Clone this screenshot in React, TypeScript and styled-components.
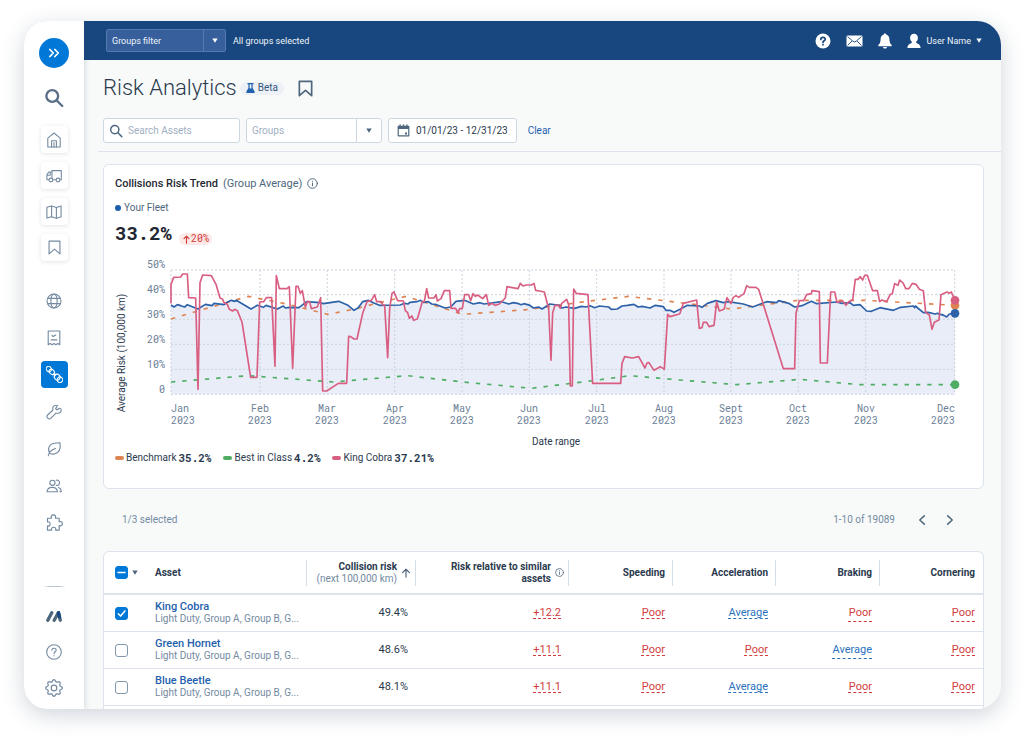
import React from "react";
import styled, { createGlobalStyle, css } from "styled-components";

const c = {
  ink: "#2b3a4e",
  strong: "#1f2833",
  slate: "#4e677e",
  muted: "#748aa1",
  line: "#dce3ec",
  link: "#1f61ad",
  blue: "#0078d7",
  navy: "#17477e",
  red: "#d23c3c",
  page: "#f8fafa",
};

const sans = `Roboto, "Liberation Sans", sans-serif`;
const mono = `"Roboto Mono", "Liberation Mono", monospace`;

const Global = createGlobalStyle`
  * { box-sizing: border-box; }
  body { margin: 0; background: #fff; color: ${c.ink}; font: 10px/12px ${sans}; }
  button, input, select { font: inherit; color: inherit; }
  svg { display: block; flex: none; }
`;

/* ---------- icons ---------- */

type IconProps = { size?: number; w?: number; children: React.ReactNode };
const Icon = ({ size = 16, w = 1.1, children }: IconProps) => (
  <svg width={size} height={size} viewBox="0 0 16 16" fill="none" stroke="currentColor" strokeWidth={w}
    strokeLinecap="round" strokeLinejoin="round" aria-hidden="true">
    {children}
  </svg>
);

const SearchIcon = ({ size = 20, w = 1.9 }: { size?: number; w?: number }) => (
  <Icon size={size} w={w}><circle cx="6.6" cy="6.4" r="4.7" /><path d="M10.2 10 14.6 14.4" /></Icon>
);
const HomeIcon = () => (
  <Icon><path d="M1.8 6.2 8 1l6.2 5.2V15H1.8Z" /><path d="M5.6 15V8.8h4.8V15M8 10.6V15" /></Icon>
);
const TruckIcon = () => (
  <Icon><path d="M6 10V2.600h9.300v9.200h-1.200M9.900 11.800H7M2.900 11.800H.9V7.200L2.600 4H6M1 7.200h3.200V4.200" /><circle cx="4.900" cy="12" r="1.900" /><circle cx="12" cy="12" r="1.900" /></Icon>
);
const MapIcon = () => (
  <Icon><path d="M.9 3.3 5.6 2l4.8 1.5L15.1 2v10.8l-4.7 1.4-4.8-1.5L.9 14Z" /><path d="M5.6 2v10.7M10.4 3.5v10.7" /></Icon>
);
const BookmarkIcon = ({ size = 16, w = 1.2 }: { size?: number; w?: number }) => (
  <Icon size={size} w={w}><path d="M2.2 1.2h11.6v13.6L8 9.8l-5.8 5Z" /></Icon>
);
const GlobeIcon = () => (
  <Icon><circle cx="8" cy="8" r="7" /><ellipse cx="8" cy="8" rx="3.2" ry="7" /><path d="M1.6 5.4h12.8M1.6 10.6h12.8" /></Icon>
);
const ReceiptIcon = () => (
  <Icon><path d="M2.2 1h11.6v13.8l-2-1.3-1.9 1.3L8 13.5l-1.9 1.3-1.9-1.3-2 1.3Z" /><path d="m6 5.5 1.2 1L9.8 5M5.2 9.9h5.6" /></Icon>
);
const ChainIcon = () => (
  <Icon size={17} w={1}>
    <g transform="rotate(44 8 8)">
      <ellipse cx="0.600" cy="8" rx="2.600" ry="2.300" />
      <ellipse cx="4.400" cy="8" rx="2.800" ry="2.100" />
      <path d="M7.200 6.800v2.400M8.800 6.800v2.400M7.200 8h1.600" />
      <ellipse cx="11.600" cy="8" rx="2.800" ry="2.600" />
      <ellipse cx="15.200" cy="8" rx="2.600" ry="2.600" />
    </g>
  </Icon>
);
const WrenchIcon = () => (
  <Icon><path d="M13.3 4.2 10.9 6 9.6 4.6l1.9-2.9C9.4.5 6.9 2 6.7 4.2c0 .6.1 1.2.3 1.8L1.6 11c-2 2 1.2 5.2 3.2 3.4l5.1-5.3c2.6.7 5.6-.6 5.3-3.4-.1-.8-.5-1.5-1.9-1.5Z" /></Icon>
);
const LeafIcon = () => (
  <Icon><path d="M2.3 14.800c.3-3.200 2.900-6 7.300-7.400M3.900 12.400C1 8 3 2.800 8.300 2.200L14 1.700c.4 3.500.4 6.700-1.600 9-2 2.300-5.700 3.200-8.500 1.700Z" /></Icon>
);
const UsersIcon = () => (
  <Icon><circle cx="6.4" cy="4.8" r="2.6" /><path d="M1 13.700c.3-3 2.400-4.300 5.200-4.300s5 1.300 5.300 4.300ZM10.200 2.300c1.800-.6 3.300.7 3.300 2.500s-1.500 3.100-3.300 2.500M12.500 9.600c1.500.5 2.600 1.700 2.800 4.100h-1.500" /></Icon>
);
const PuzzleIcon = () => (
  <Icon size={17}><path d="M1.400 4h3.800c-.9-1.700.2-3.200 1.800-3.200S9.700 2.300 8.800 4h3.600v3.400c1.600-.8 3 .1 3 1.700s-1.400 2.600-3 1.700v4.400H9.100c.7-1.600-.5-2.700-1.900-2.700s-2.600 1.100-1.900 2.700H1.400v-4c1.500.6 2.500-.5 2.500-1.900S2.900 6.900 1.400 7.500Z" /></Icon>
);
const LogoIcon = () => (
  <svg width="18" height="16" viewBox="0 0 18 16" aria-hidden="true" strokeLinecap="round" fill="none">
    <path d="M2.800 12.200 6.800 4.800" stroke={c.slate} strokeWidth="3.400" />
    <path d="m13.500 4.800 1.800 7.400" stroke={c.slate} strokeWidth="3.400" />
    <path d="M9.200 12.200 13.300 4.800" stroke={c.slate} strokeWidth="3.400" />
    <path d="m13.500 4.800.9 4" stroke={c.navy} strokeWidth="3.400" />
  </svg>
);
const HelpIcon = () => (
  <Icon><circle cx="8" cy="8" r="7.3" /><path d="M5.900 6.300c0-2.800 4.300-2.700 4.300-.2C10.200 7.700 8 7.800 8 9.600M8 11.600v.2" /></Icon>
);

/* Eight soft lobes around the hub. */
const gearOutline = "M" + Array.from({ length: 96 }, (_, i) => {
  const a = (i / 96) * Math.PI * 2;
  const r = 6.500 + 0.900 * Math.cos(8 * a);
  return `${(8 + r * Math.cos(a)).toFixed(2)} ${(8 + r * Math.sin(a)).toFixed(2)}`;
}).join("L") + "Z";
const GearIcon = () => (
  <Icon size={18}><circle cx="8" cy="8" r="2.500" /><path d={gearOutline} /></Icon>
);
const InfoIcon = ({ size = 11 }: { size?: number }) => (
  <Icon size={size} w={1.4}><circle cx="8" cy="8" r="7" /><path d="M8 7.400v4M8 4.700v.3" /></Icon>
);
const Chevrons = () => (
  <Icon size={14} w={2}><path d="m3.300 4 3.900 4-3.900 4M9 4l3.900 4L9 12" /></Icon>
);
const CalendarIcon = () => (
  <svg width="13" height="13" viewBox="0 0 13 13" aria-hidden="true">
    <path d="M1.200 2.400h10.600v9.400H1.200Z" fill="none" stroke="currentColor" strokeWidth="1.200" strokeLinejoin="round" />
    <path d="M1 2h11v3H1ZM2.400.4h1.400V3H2.400ZM5.800.4h1.400V3H5.800ZM9.200.4h1.400V3H9.200ZM8 8.400h2v2H8Z" fill="currentColor" />
  </svg>
);
const FlaskIcon = () => (
  <svg width="9" height="10" viewBox="0 0 9 10" aria-hidden="true" fill={c.link}>
    <path d="M1.500 0h6v1.200h-.9V5L8.600 8.400V10H.4V8.400L2.400 5V1.200h-.9ZM3.600 1.200V5.400h1.800V1.200Z" fillRule="evenodd" />
  </svg>
);
const Caret = () => (
  <svg width="6" height="5" viewBox="0 0 6 5" aria-hidden="true"><path d="M.3.400h5.400L3 4.800Z" fill="currentColor" /></svg>
);

/* ---------- shell ---------- */

const Shell = styled.div`
  display: flex;
  min-height: calc(100vh - 53px);
  margin: 21px 23px 32px 24px;
  border-radius: 24px;
  overflow: hidden;
  background: ${c.page};
`;
const Backdrop = styled.div`
  display: flow-root;
  & > ${Shell} { box-shadow: 0 6px 22px rgba(60, 80, 110, 0.24); }
`;
const Sidebar = styled.nav`
  position: relative;
  z-index: 1;
  flex: none;
  width: 60px;
  padding: 17px 0 8px;
  display: flex;
  flex-direction: column;
  align-items: center;
  background: #fff;
  box-shadow: 1px 0 6px rgba(60, 80, 110, 0.2);
`;
const Expand = styled.button`
  display: grid;
  place-items: center;
  width: 30px;
  height: 30px;
  padding: 0;
  border: 0;
  border-radius: 50%;
  background: ${c.blue};
  color: #fff;
`;
const NavGroup = styled.div<{ $gap: number; $top: number }>`
  display: flex;
  flex-direction: column;
  gap: ${(p) => p.$gap}px;
  margin-top: ${(p) => p.$top}px;
`;
const NavFoot = styled(NavGroup)`
  margin-top: auto;
  &::before {
    content: "";
    height: 1px;
    margin: 0 2px 6px;
    background: linear-gradient(90deg, transparent, #b9c3cf 30%, #b9c3cf 70%, transparent);
  }
`;
const NavLink = styled.a<{ $kind?: "tile" | "active" }>`
  display: grid;
  place-items: center;
  width: 27px;
  height: 27px;
  border-radius: 4px;
  color: ${c.muted};
  ${(p) => p.$kind === "tile" && css`background: #fff; box-shadow: 0 1px 4px rgba(60, 80, 110, 0.16);`}
  ${(p) => p.$kind === "active" && css`background: ${c.blue}; color: #fff;`}
`;
const SearchLink = styled(NavLink)`
  margin-top: 16px;
  color: #5b7087;
`;
const Main = styled.div`
  flex: 1;
  min-width: 0;
  display: flex;
  flex-direction: column;
`;

/* ---------- top bar ---------- */

const TopBar = styled.header`
  display: flex;
  align-items: center;
  gap: 7px;
  height: 39px;
  padding: 0 19px 0 22px;
  background: ${c.navy};
  color: #f0f4f9;
  font-size: 9px;
`;
const TopActions = styled.div`
  display: flex;
  align-items: center;
  gap: 15px;
  margin-left: auto;
`;
const IconButton = styled.button`
  display: flex;
  align-items: center;
  gap: 5px;
  padding: 0;
  border: 0;
  background: none;
  color: inherit;
`;

/* ---------- form fields ---------- */

const SelectBox = styled.span<{ $dark?: boolean }>`
  position: relative;
  display: block;
  width: ${(p) => (p.$dark ? 120 : 136)}px;
  height: ${(p) => (p.$dark ? 23 : 25)}px;
  border: 1px solid ${(p) => (p.$dark ? "#5578ae" : "#cdd7e2")};
  border-radius: ${(p) => (p.$dark ? 2 : 3)}px;
  background: ${(p) => (p.$dark ? "#365f9c" : "#fff")};
  color: ${(p) => (p.$dark ? "#fff" : c.slate)};
  select {
    appearance: none;
    width: 100%;
    height: 100%;
    padding: 0 26px 0 5px;
    border: 0;
    background: none;
    color: ${(p) => (p.$dark ? "#f0f4f9" : "#9fb0c3")};
  }
`;
const CaretCell = styled.span<{ $dark?: boolean }>`
  position: absolute;
  inset: 0 0 0 auto;
  display: grid;
  place-items: center;
  width: ${(p) => (p.$dark ? 22 : 25)}px;
  border-left: 1px solid ${(p) => (p.$dark ? "#5578ae" : "#cdd7e2")};
  pointer-events: none;
`;
const Field = styled.label`
  display: flex;
  align-items: center;
  gap: 5px;
  width: 137px;
  height: 25px;
  padding-left: 5px;
  border: 1px solid #cdd7e2;
  border-radius: 3px;
  background: #fff;
  color: ${c.slate};
  input {
    min-width: 0;
    flex: 1;
    padding: 0;
    border: 0;
    outline: 0;
    background: none;
  }
  input::placeholder { color: #9fb0c3; opacity: 1; }
`;
const DateButton = styled.button`
  display: flex;
  align-items: center;
  gap: 6px;
  height: 25px;
  padding: 0 8px;
  border: 1px solid #cdd7e2;
  border-radius: 3px;
  background: #fff;
  color: ${c.slate};
  span { color: ${c.ink}; }
`;
const ClearButton = styled(IconButton)`
  margin-left: 5px;
  color: ${c.link};
`;

/* ---------- page head ---------- */

const PageHead = styled.section`
  margin-left: 14px;
  padding: 15px 17px 8px 5px;
  border-bottom: 1px solid ${c.line};
`;
const TitleRow = styled.div`
  display: flex;
  align-items: center;
  height: 26px;
  color: ${c.slate};
  h1 {
    margin: 0 3px 0 0;
    color: ${c.ink};
    font-size: 22px;
    line-height: 26px;
    font-weight: 300;
  }
`;
const BetaPill = styled.span`
  display: flex;
  align-items: center;
  gap: 3px;
  height: 13px;
  margin-right: 13px;
  padding: 0 6px;
  border-radius: 7px;
  background: #edf1f6;
  color: #34567f;
`;
const Filters = styled.div`
  display: flex;
  align-items: center;
  gap: 6px;
  margin-top: 17px;
`;

/* ---------- trend card ---------- */

const Content = styled.main`
  flex: 1;
  display: flex;
  flex-direction: column;
  padding: 12px 17px 0 19px;
`;
const Card = styled.section`
  padding: 12px 11px 24px;
  border: 1px solid ${c.line};
  border-radius: 6px;
  background: #fff;
`;
const CardTitle = styled.h2`
  display: flex;
  align-items: center;
  gap: 5px;
  margin: 0;
  color: ${c.strong};
  font-size: 11px;
  line-height: 13px;
  font-weight: 500;
  span { color: ${c.slate}; font-weight: 400; }
  svg { color: ${c.slate}; }
`;
const FleetKey = styled.div`
  display: flex;
  align-items: center;
  gap: 3px;
  margin-top: 12px;
  color: ${c.slate};
  &::before {
    content: "";
    width: 6px;
    height: 6px;
    border-radius: 50%;
    background: #1f5cab;
  }
`;
const FleetValue = styled.div`
  display: flex;
  align-items: center;
  gap: 7px;
  height: 24px;
  margin-top: 7px;
  color: ${c.strong};
  font: 700 19px/24px ${mono};
`;
const RisePill = styled.span`
  display: flex;
  align-items: center;
  align-self: flex-end;
  height: 12px;
  padding: 0 3px;
  border-radius: 6px;
  background: #fde9e7;
  color: ${c.red};
  font: 400 10px/12px ${mono};
`;
const Chart = styled.svg`
  width: 100%;
  height: auto;
  margin-top: 11px;
  text { font: 10px ${sans}; fill: ${c.ink}; }
  .tick { font-family: ${mono}; fill: #6b8097; }
`;
const Legend = styled.ul`
  display: flex;
  gap: 12px;
  margin: 2px 0 0;
  padding: 0;
  list-style: none;
`;
const LegendItem = styled.li<{ $color: string }>`
  display: flex;
  align-items: center;
  gap: 2px;
  &::before {
    content: "";
    width: 9px;
    height: 4px;
    border-radius: 2px;
    background: ${(p) => p.$color};
  }
  b { font: 700 11px/12px ${mono}; }
`;

const ORANGE = "#dd8452";
const GREEN = "#4fae64";
const PINK = "#d95f82";
const FLEET = "#2d62a8";

/* Each series is stored as three spans of x,y samples; the number is where the span starts. */
type Span = [number, string];
const toPath = (spans: Span[]) =>
  "M" + spans.flatMap(([start, s]) => s.split(" ").map((p) => {
    const [x, y] = p.split(",").map(Number);
    return `${x + start} ${y}`;
  })).join("L");

const cobra = toPath([
  [-213, "213,160 213,103 221,82 242,81 248,72 262,72 266,143 287,144 294,418 300,98 308,75 334,77 348,103 360,144 368,148 372,158 382,163 388,178 398,183 404,178 412,182 426,216 452,382 471,382 479,156 491,155 499,143 515,143 525,349 529,77 538,116 561,116 568,110 578,355 588,109 594,109 601,130 607,122 616,172 622,155 629,155 634,176 652,171 662,143 668,423 680,423 715,400 740,400 746,259 752,260 762,267 771,267 788,190 801,155 814,151 824,134 830,155 843,155 848,164 854,166 863,323 869,176 876,130 882,126 893,152"],
  [657, "40,153 46,182 53,188 58,205 66,198 71,211 82,207 97,155 103,155 110,116 116,144 132,144 138,134 142,153 153,146 163,122 179,122 183,175 197,175 204,188 209,176 217,176 224,134 236,134 242,152 249,131 256,139 263,135 278,146 289,134 296,166 306,160 315,166 328,162 346,144 351,110 384,116 391,100 399,108 408,105 424,105 432,100 437,121 448,123 463,126 476,176 483,331 488,188 495,166 505,166 511,175 515,160 530,148 536,164 541,408 547,408 551,117 559,130 594,134 608,400 692,400 696,340 704,320 727,324 746,320 765,354 771,339 777,338 792,361 811,350 823,358 833,193 840,200 868,192"],
  [1527, "0,190 10,160 50,150 58,235 66,233 70,217 80,217 87,230 102,226 110,155 118,183 132,178 141,143 153,161 160,142 168,137 176,142 192,131 200,107 208,112 228,112 236,118 310,356 344,356 348,190 358,152 371,152 380,134 394,131 396,122 418,125 421,339 442,339 452,126 464,126 471,157 488,153 498,166 506,155 518,150 526,88 534,88 541,80 548,90 554,76 562,76 578,122 592,122 599,155 606,150 620,155 631,133 637,131 644,101 654,106 659,90 670,100 677,116 687,116 697,100 708,103 718,118 730,122 737,187 748,195 756,238 763,217 777,210 783,134 801,126 808,130 814,126 825,150"],
]);
const fleet = toPath([
  [-213, "213,165 222,171 232,164 242,167 254,171 262,164 294,177 316,163 336,167 342,160 372,164 384,155 394,151 404,154 409,151 453,177 472,166 490,172 498,166 532,177 550,168 556,174 567,172 597,173 620,155 660,158 670,161 716,154 744,166 762,181 774,174 788,155 805,151 820,158 838,166"],
  [657, "30,165 44,160 54,162 60,157 80,155 92,151 100,157 115,155 125,162 140,164 165,174 182,171 198,154 224,151 250,162 270,158 282,162 335,155 356,162 370,158 386,161 393,164 402,161 420,166 430,174 446,171 456,177 480,162 508,166 516,174 528,171 554,175 574,169 588,171 600,167 614,173 628,168 656,171 664,178 682,177 696,168 712,166 732,163 744,171 756,169 780,174 796,166 820,170 828,181 840,181 852,187"],
  [1527, "0,178 22,166 58,168 66,172 82,160 108,152 130,158 145,155 190,162 218,171 260,155 290,158 296,152 326,160 344,171 366,167 394,154 410,161 470,156 486,160 510,158 520,166 540,164 560,183 574,184 600,173 640,181 662,172 700,168 704,173 706,168 730,188 744,187 766,192 772,190 792,196 800,201 808,192 825,190"],
]);
const benchmark = toPath([
  [-213, "213,207 300,181 380,158 445,139 560,162 640,182 684,193 760,178 830,160"],
  [657, "48,139 218,193 410,179 600,153 716,139"],
  [1527, "0,158 155,177 355,151 556,151 825,166"],
]);
const best = toPath([
  [-213, "213,396 445,377 700,396"],
  [657, "52,377 218,396 424,415 600,393 720,377"],
  [1527, "0,390 170,404 360,388 540,404 825,404"],
]);

const months = ["Jan", "Feb", "Mar", "Apr", "May", "Jun", "Jul", "Aug", "Sept", "Oct", "Nov", "Dec"];
const monthX = [0, 267, 469, 671, 873, 1075, 1277, 1479, 1680, 1882, 2084, 2351];
const levels = ["50%", "40%", "30%", "20%", "10%", "0"];
const levelY = [60, 134, 208, 283, 358, 433];

const TrendChart = () => (
  <Chart viewBox="0 0 857 194" role="img" aria-label="Collisions risk trend by month">
    {levels.map((l, i) => (
      <text key={l} className="tick" x="50" y={12 + i * 25} textAnchor="end">{l}</text>
    ))}
    <g transform="translate(56 -6) scale(0.33333)" fill="none" strokeLinejoin="round">
      <path d={`${fleet}L2352 433L0 433Z`} fill="#e9edf8" />
      <g stroke="#c9d3dd" strokeWidth="3" strokeDasharray="6 6">
        {levelY.map((y) => <path key={y} d={`M0 ${y}H2352`} />)}
        {monthX.map((x) => <path key={x} d={`M${x} 60V433`} />)}
      </g>
      <path d={benchmark} stroke={ORANGE} strokeWidth="5" strokeDasharray="13 21" />
      <path d={best} stroke={GREEN} strokeWidth="5" strokeDasharray="13 21" />
      <path d={fleet} stroke={FLEET} strokeWidth="5" />
      <path d={cobra} stroke={PINK} strokeWidth="5" />
      <circle cx="2352" cy="166" r="13" fill={ORANGE} />
      <circle cx="2352" cy="151" r="13" fill={PINK} />
      <circle cx="2352" cy="190" r="13" fill={FLEET} />
      <circle cx="2352" cy="404" r="13" fill={GREEN} />
    </g>
    {months.map((m, i) => {
      const anchor = i === 0 ? "start" : i === 11 ? "end" : "middle";
      const x = 56 + Math.round(monthX[i] / 3);
      return (
        <g key={m} textAnchor={anchor}>
          <text className="tick" x={x} y="156">{m}</text>
          <text className="tick" x={x} y="168">2023</text>
        </g>
      );
    })}
    <text x="441" y="189" textAnchor="middle">Date range</text>
    <text transform="translate(10 97) rotate(-90)" textAnchor="middle">Average Risk (100,000 km)</text>
  </Chart>
);

/* ---------- table ---------- */

const TableBar = styled.div`
  display: flex;
  align-items: center;
  height: 62px;
  padding: 0 28px 0 19px;
  color: ${c.muted};
`;
const Pager = styled.div`
  display: flex;
  align-items: center;
  gap: 16px;
  margin-left: auto;
  color: ${c.slate};
  & > span { margin-right: 5px; color: ${c.muted}; }
`;
const TableCard = styled.section`
  flex: 1;
  border: 1px solid ${c.line};
  border-bottom: 0;
  border-radius: 6px 6px 0 0;
  background: #fff;
`;
const Table = styled.table`
  width: 100%;
  table-layout: fixed;
  border-collapse: separate;
  border-spacing: 0;
`;
const Tr = styled.tr`
  height: 37px;
`;
const Th = styled.th<{ $left?: boolean; $rule?: boolean; $icon?: boolean; $w?: number }>`
  height: 43px;
  width: ${(p) => (p.$w ? p.$w + "px" : "auto")};
  padding: 0 ${(p) => (p.$icon ? 5 : 8)}px 0 8px;
  border-bottom: 2px solid ${c.line};
  text-align: ${(p) => (p.$left ? "left" : "right")};
  font-weight: 700;
  color: ${c.ink};
  ${(p) => p.$rule && css`background: linear-gradient(#d5dee8, #d5dee8) right center / 1px 26px no-repeat;`}
`;
const HeadLabel = styled.span`
  display: flex;
  align-items: center;
  justify-content: flex-end;
  gap: 4px;
  small { display: block; font-size: 10px; font-weight: 400; color: ${c.muted}; white-space: nowrap; }
  svg { color: ${c.slate}; }
`;
const CheckCell = styled.span`
  display: flex;
  align-items: center;
  gap: 4px;
  padding-left: 3px;
  color: ${c.slate};
`;
const Td = styled.td<{ $left?: boolean }>`
  padding: 0 8px;
  border-bottom: 1px solid ${c.line};
  text-align: ${(p) => (p.$left ? "left" : "right")};
  font-size: 11px;
  color: ${c.ink};
`;
const Checkbox = styled.input`
  appearance: none;
  display: block;
  width: 13px;
  height: 13px;
  margin: 0;
  border: 1px solid #8397ab;
  border-radius: 3px;
  background: #fff;
  &:checked, &:indeterminate { border-color: ${c.blue}; background-color: ${c.blue}; }
`;
const CheckWrap = styled.label`
  position: relative;
  display: block;
  width: 13px;
  height: 13px;
  color: #fff;
  svg { position: absolute; inset: 0; pointer-events: none; }
`;
const AssetName = styled.a`
  display: block;
  color: ${c.link};
  font-size: 11px;
  line-height: 12px;
  font-weight: 500;
  text-decoration: none;
`;
const AssetGroups = styled.span`
  display: block;
  color: ${c.muted};
  font-size: 10px;
  line-height: 12px;
  white-space: nowrap;
`;
const Rating = styled.a<{ $good?: boolean; $low?: boolean }>`
  color: ${(p) => (p.$good ? "#2a72bd" : c.red)};
  text-decoration: underline dashed 1px;
  text-underline-offset: ${(p) => (p.$low ? 5 : 2)}px;
  text-decoration-skip-ink: none;
`;

const SelectMark = ({ label, state }: { label: string; state: "on" | "off" | "mixed" }) => (
  <CheckWrap>
    <Checkbox type="checkbox" aria-label={label} defaultChecked={state === "on"}
      ref={(el) => { if (el) el.indeterminate = state === "mixed"; }} />
    {state !== "off" && (
      <svg width="13" height="13" viewBox="0 0 13 13" fill="none" stroke="currentColor" strokeWidth="1.500"
        strokeLinecap="round" strokeLinejoin="round" aria-hidden="true">
        <path d={state === "on" ? "m3.300 6.700 2.300 2.400 4.300-5.200" : "M3 6.500h7"} />
      </svg>
    )}
  </CheckWrap>
);

const rows = [
  { name: "King Cobra", risk: "49.4%", rel: "+12.2", scores: ["Poor", "Average", "Poor", "Poor"], low: [2, 3] },
  { name: "Green Hornet", risk: "48.6%", rel: "+11.1", scores: ["Poor", "Poor", "Average", "Poor"], low: [2] },
  { name: "Blue Beetle", risk: "48.1%", rel: "+11.1", scores: ["Poor", "Average", "Poor", "Poor"], low: [] as number[] },
];

export default function App() {
  return (
    <Backdrop>
      <Global />
      <Shell>
        <Sidebar aria-label="Main">
          <Expand aria-label="Expand menu"><Chevrons /></Expand>
          <SearchLink href="#search" aria-label="Search"><SearchIcon /></SearchLink>
          <NavGroup $gap={9} $top={15}>
            <NavLink $kind="tile" href="#home" aria-label="Home"><HomeIcon /></NavLink>
            <NavLink $kind="tile" href="#vehicles" aria-label="Vehicles"><TruckIcon /></NavLink>
            <NavLink $kind="tile" href="#map" aria-label="Map"><MapIcon /></NavLink>
            <NavLink $kind="tile" href="#saved" aria-label="Saved"><BookmarkIcon size={15} /></NavLink>
          </NavGroup>
          <NavGroup $gap={10} $top={26}>
            <NavLink href="#web" aria-label="Web"><GlobeIcon /></NavLink>
            <NavLink href="#reports" aria-label="Reports"><ReceiptIcon /></NavLink>
            <NavLink $kind="active" href="#risk" aria-label="Risk"><ChainIcon /></NavLink>
            <NavLink href="#maintenance" aria-label="Maintenance"><WrenchIcon /></NavLink>
            <NavLink href="#sustainability" aria-label="Sustainability"><LeafIcon /></NavLink>
            <NavLink href="#people" aria-label="People"><UsersIcon /></NavLink>
            <NavLink href="#addins" aria-label="Add-ins"><PuzzleIcon /></NavLink>
          </NavGroup>
          <NavFoot $gap={9} $top={0}>
            <NavLink href="#marketplace" aria-label="Marketplace"><LogoIcon /></NavLink>
            <NavLink href="#help" aria-label="Help"><HelpIcon /></NavLink>
            <NavLink href="#settings" aria-label="Settings"><GearIcon /></NavLink>
          </NavFoot>
        </Sidebar>

        <Main>
          <TopBar>
            <SelectBox $dark>
              <select aria-label="Groups filter"><option>Groups filter</option></select>
              <CaretCell $dark><Caret /></CaretCell>
            </SelectBox>
            <span>All groups selected</span>
            <TopActions>
              <IconButton aria-label="Help">
                <svg width="16" height="16" viewBox="0 0 16 16" aria-hidden="true">
                  <circle cx="8" cy="8" r="7.500" fill="#fff" />
                  <path d="M5.800 6.400c0-2.800 4.400-2.700 4.400-.2C10.200 7.800 8 7.700 8 9.400M8 11.500v.3" fill="none" stroke={c.navy} strokeWidth="1.700" strokeLinecap="round" />
                </svg>
              </IconButton>
              <IconButton aria-label="Messages">
                <svg width="17" height="12" viewBox="0 0 17 12" aria-hidden="true">
                  <rect x=".5" y=".5" width="16" height="11" rx="1.200" fill="#fff" />
                  <path d="m1.500 1.500 5.300 4.700q1.700 1.400 3.400 0l5.300-4.700M1.500 10.500 6 6M15.500 10.500 11 6" fill="none" stroke={c.navy} strokeWidth=".9" />
                </svg>
              </IconButton>
              <IconButton aria-label="Notifications">
                <svg width="14" height="16" viewBox="0 0 14 16" fill="#fff" aria-hidden="true">
                  <path d="M7 .4c.8 0 1.200.5 1.200 1.200 2.200.6 3.100 2.300 3.200 4.500.1 3.200.7 4.600 2.300 6v1.200H.3v-1.200c1.600-1.400 2.200-2.800 2.300-6 .1-2.200 1-3.900 3.200-4.500C5.800.9 6.200.4 7 .4ZM5 13.900h4c-.2 2.200-3.800 2.200-4 0Z" />
                </svg>
              </IconButton>
              <IconButton>
                <svg width="14" height="16" viewBox="0 0 14 16" fill="#fff" aria-hidden="true">
                  <path d="M7 .8c2.400 0 4 1.800 3.900 4.100 0 1.700-.7 3-1.800 3.900v.8c0 .9 4.500 1.200 4.500 5.500H.4c0-4.300 4.500-4.600 4.500-5.500v-.8C3.800 7.900 3.100 6.600 3.100 4.900 3 2.600 4.600.8 7 .8Z" />
                </svg>
                <span>User Name</span>
                <Caret />
              </IconButton>
            </TopActions>
          </TopBar>

          <PageHead>
            <TitleRow>
              <h1>Risk Analytics</h1>
              <BetaPill><FlaskIcon /><span>Beta</span></BetaPill>
              <IconButton aria-label="Bookmark this page"><BookmarkIcon size={17} w={1.600} /></IconButton>
            </TitleRow>
            <Filters>
              <Field>
                <SearchIcon size={14} w={1.700} />
                <input type="search" aria-label="Search assets" placeholder="Search Assets" />
              </Field>
              <SelectBox>
                <select aria-label="Groups"><option>Groups</option></select>
                <CaretCell><Caret /></CaretCell>
              </SelectBox>
              <DateButton><CalendarIcon /><span>01/01/23 - 12/31/23</span></DateButton>
              <ClearButton>Clear</ClearButton>
            </Filters>
          </PageHead>

          <Content>
            <Card>
              <CardTitle>Collisions Risk Trend <span>(Group Average)</span><InfoIcon /></CardTitle>
              <FleetKey>Your Fleet</FleetKey>
              <FleetValue>
                33.2%
                <RisePill>
                  <Icon size={9} w={2}><path d="M8 14.500V2M3.500 6.500 8 2l4.500 4.500" /></Icon>20%
                </RisePill>
              </FleetValue>
              <TrendChart />
              <Legend>
                <LegendItem $color={ORANGE}>Benchmark <b>35.2%</b></LegendItem>
                <LegendItem $color={GREEN}>Best in Class <b>4.2%</b></LegendItem>
                <LegendItem $color={PINK}>King Cobra <b>37.21%</b></LegendItem>
              </Legend>
            </Card>

            <TableBar>
              <span>1/3 selected</span>
              <Pager>
                <span>1-10 of 19089</span>
                <IconButton aria-label="Previous page"><Icon size={12} w={2}><path d="M11 2.500 5 8l6 5.500" /></Icon></IconButton>
                <IconButton aria-label="Next page"><Icon size={12} w={2}><path d="m5 2.500 6 5.500-6 5.500" /></Icon></IconButton>
              </Pager>
            </TableBar>

            <TableCard>
              <Table>
                <thead>
                  <tr>
                    <Th $left $w={43}><CheckCell><SelectMark label="Select all" state="mixed" /><Caret /></CheckCell></Th>
                    <Th $left $rule>Asset</Th>
                    <Th $rule $icon $w={109}>
                      <HeadLabel>
                        <span>Collision risk<small>(next 100,000 km)</small></span>
                        <Icon size={10} w={1.900}><path d="M8 14.500V2M2.500 7.500 8 2l5.500 5.500" /></Icon>
                      </HeadLabel>
                    </Th>
                    <Th $rule $icon $w={153}><HeadLabel><span>Risk relative to similar assets</span><InfoIcon size={9} /></HeadLabel></Th>
                    <Th $rule $w={104}>Speeding</Th>
                    <Th $rule $w={103}>Acceleration</Th>
                    <Th $rule $w={104}>Braking</Th>
                    <Th $w={103}>Cornering</Th>
                  </tr>
                </thead>
                <tbody>
                  {rows.map((r, i) => (
                    <Tr key={r.name}>
                      <Td $left><CheckCell><SelectMark label={`Select ${r.name}`} state={i === 0 ? "on" : "off"} /></CheckCell></Td>
                      <Td $left>
                        <AssetName href="#asset">{r.name}</AssetName>
                        <AssetGroups>Light Duty, Group A, Group B, G...</AssetGroups>
                      </Td>
                      <Td>{r.risk}</Td>
                      <Td><Rating href="#relative">{r.rel}</Rating></Td>
                      {r.scores.map((s, j) => (
                        <Td key={j}><Rating href="#score" $good={s === "Average"} $low={r.low.includes(j)}>{s}</Rating></Td>
                      ))}
                    </Tr>
                  ))}
                </tbody>
              </Table>
            </TableCard>
          </Content>
        </Main>
      </Shell>
    </Backdrop>
  );
}
